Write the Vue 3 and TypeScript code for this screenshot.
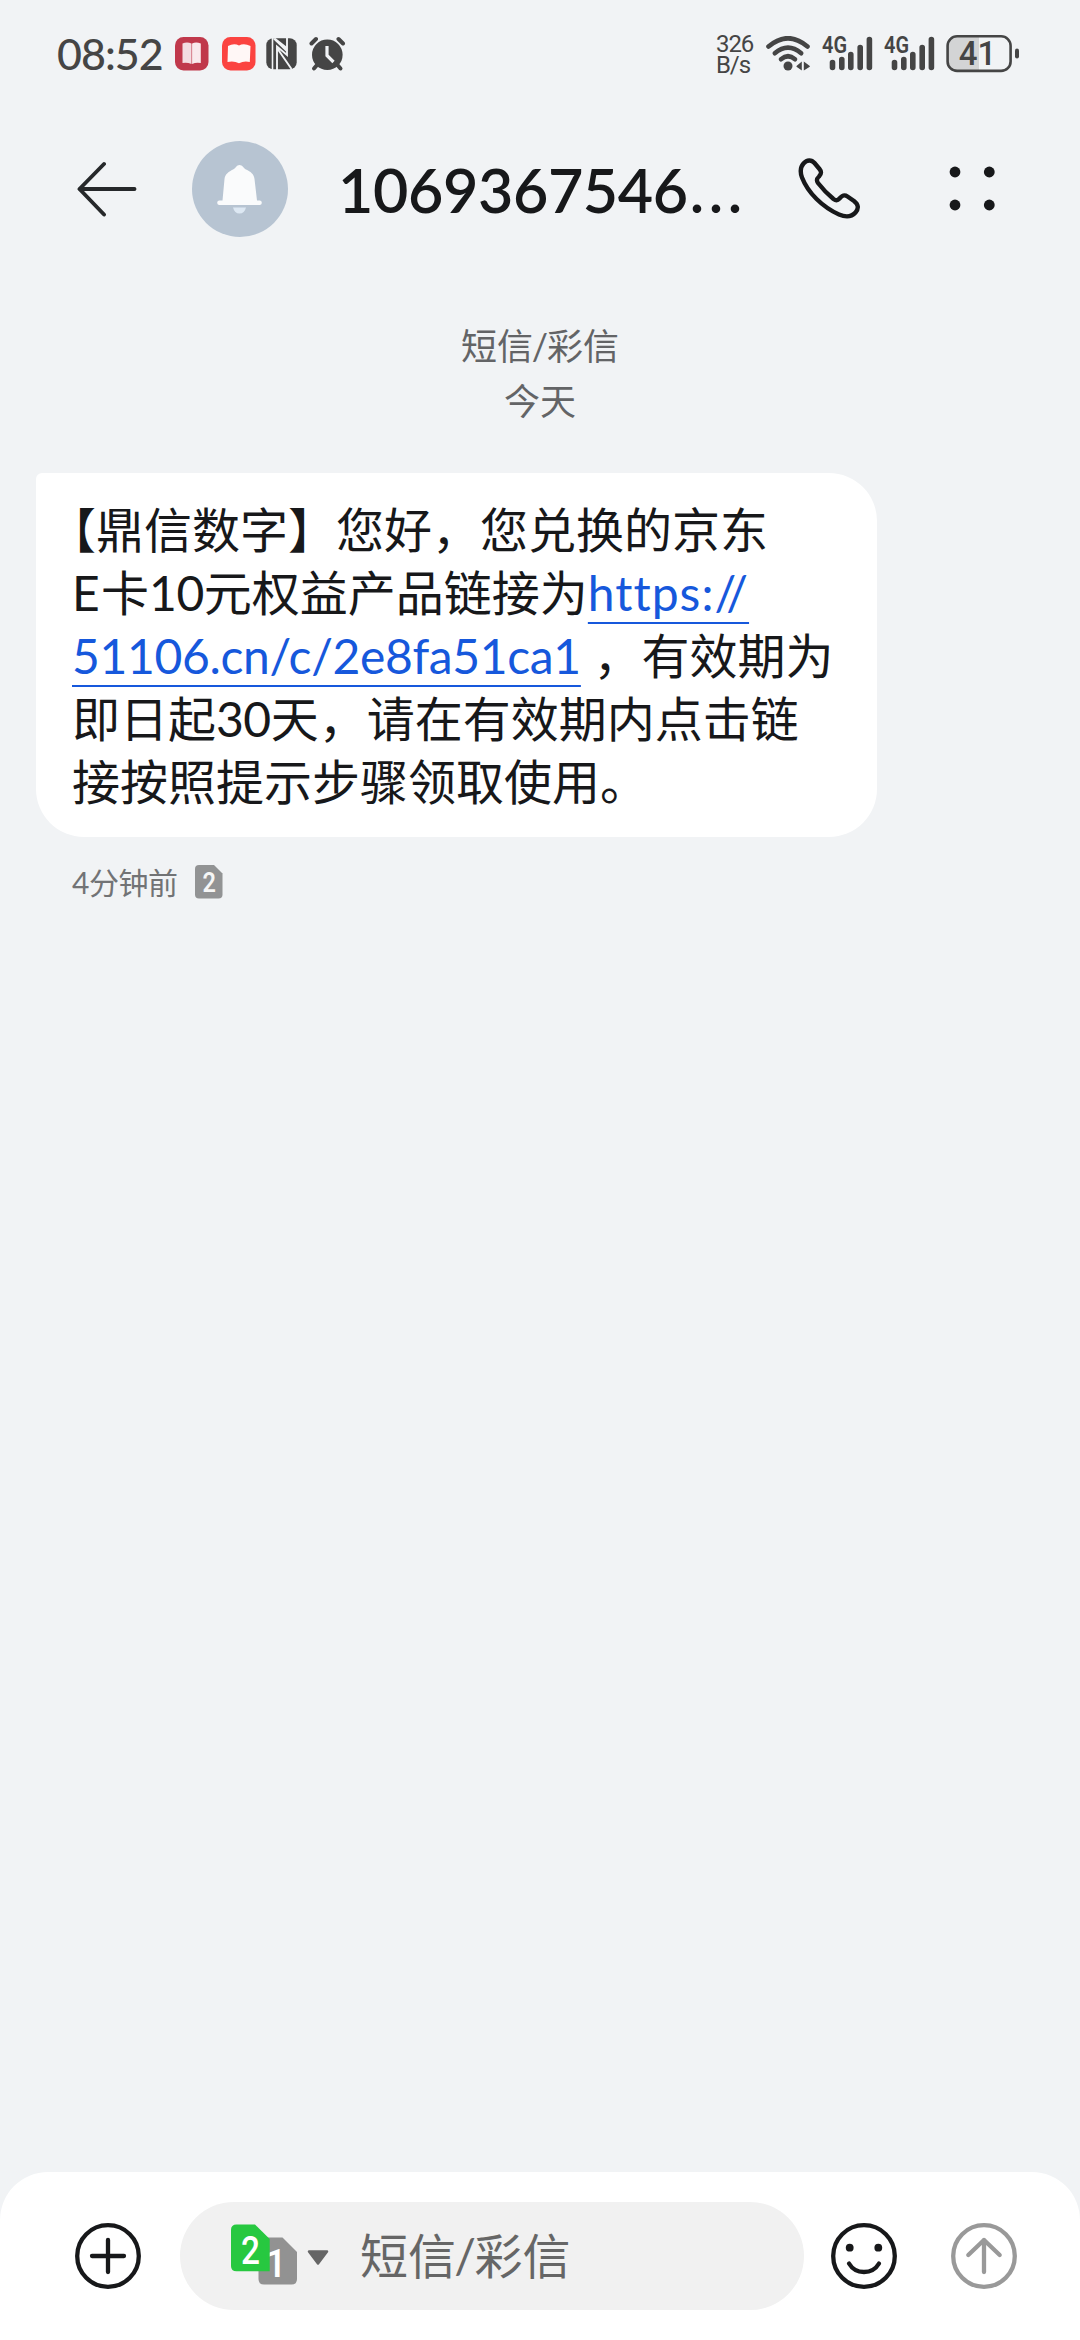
<script setup lang="ts">
interface Segment {
  text: string
  kind: 'cjk' | 'latin' | 'link'
  spacing?: number
}

const messageLines: Segment[][] = [
  [{ text: '【鼎信数字】您好，您兑换的京东', kind: 'cjk' }],
  [
    { text: 'E', kind: 'latin', spacing: 1.2 },
    { text: '卡', kind: 'cjk' },
    { text: '10', kind: 'latin', spacing: -0.4 },
    { text: '元权益产品链接为', kind: 'cjk' },
    { text: 'https://', kind: 'link', spacing: 1 },
  ],
  [
    { text: '51106.cn/c/2e8fa51ca1', kind: 'link', spacing: -0.35 },
    { text: ' ', kind: 'latin', spacing: 0.2 },
    { text: '，有效期为', kind: 'cjk' },
  ],
  [
    { text: '即日起', kind: 'cjk' },
    { text: '30', kind: 'latin', spacing: -0.5 },
    { text: '天，请在有效期内点击链', kind: 'cjk' },
  ],
  [{ text: '接按照提示步骤领取使用。', kind: 'cjk' }],
]

const sims = [1, 2]
</script>

<template>
  <div class="screen">
    <header class="status">
      <div class="status-left">
        <span class="clock">08:52</span>
        <svg class="book" width="34" height="34" viewBox="0 0 34 34">
          <rect width="33.5" height="33.5" rx="8.5" fill="#c0384b" />
          <path d="M7.5 6.500Q12 4.500 16.500 6.500V27Q12 25 7.500 26Z" fill="#f3dce1" />
          <path d="M17.100 6.500Q21 4.500 25.800 6.500V26Q21 25 17.100 27Z" fill="#f9e9ec" />
        </svg>
        <svg class="book2" width="34" height="34" viewBox="0 0 34 34">
          <rect width="33.5" height="33.5" rx="8.5" fill="#fb4340" />
          <path d="M6 9Q12 6 17 8.500Q22 6 28.500 9L27.800 25Q22 23.500 17 26.300Q12 23.500 5.500 25Z" fill="#fff7f6" />
        </svg>
        <svg class="nfc" width="32" height="34" viewBox="0 0 32 34">
          <rect x="0.3" y="1.200" width="30.400" height="31" rx="7" fill="#454545" />
          <path d="M6.500 1V33" fill="none" stroke="#f1f3f5" stroke-width="1.600" />
          <path d="M6.500 1.500L21 15.500V10L9.500 1Z" fill="#f1f3f5" />
          <path d="M21 1V18L11 9.500V33M11 11L25.500 32" fill="none" stroke="#f1f3f5" stroke-width="1.900" />
        </svg>
        <svg class="alarm" width="38" height="36" viewBox="0 0 38 36">
          <g stroke="#454545" stroke-linecap="round" fill="none">
            <path d="M2.500 7.500L7 3M34 7.500L29.500 3" stroke-width="4" />
            <path d="M8 29L5 32.500M28.500 29L31.500 32.500" stroke-width="4" />
          </g>
          <circle cx="18.300" cy="18.700" r="15.300" fill="#454545" />
          <path d="M18 10V19.500L24.500 26" fill="none" stroke="#f1f3f5" stroke-width="3.200" />
        </svg>
      </div>
      <div class="status-right">
        <div class="speed"><span>326</span><span>B/s</span></div>
        <svg class="wifi" width="46" height="36" viewBox="0 0 46 36">
          <g fill="none" stroke="#454545" stroke-width="4.600" stroke-linecap="round">
            <path d="M2.500 10.500Q22 -6 41.500 10.500" />
            <path d="M8.800 17.300Q22 6 35.200 17.300" />
            <path d="M15 23.200Q22 17.300 29 23.200" />
          </g>
          <circle cx="22" cy="30" r="4.500" fill="#454545" />
          <path d="M35.800 25.500V34.500L30.500 30.800V30ZM37.800 25.500V34.500L43.800 30.800V30Z" fill="#454545" />
        </svg>
        <svg v-for="sim in sims" :key="sim" class="signal" width="52" height="42" viewBox="0 -6 52 42">
          <text x="0" y="17" class="gen" textLength="25" lengthAdjust="spacingAndGlyphs">4G</text>
          <path
            d="M10.500 26.500V31.500M19.800 23.500V31.500M28.800 18.500V31.500M38.200 11.500V31.500M47.400 3.500V31.500"
            stroke="#454545"
            stroke-width="5.600"
            stroke-linecap="round"
          />
        </svg>
        <svg class="battery" width="76" height="40" viewBox="0 0 76 40">
          <path d="M12 2H33V37H12Q2 37 2 27V12Q2 2 12 2Z" fill="#d3d4d5" />
          <rect x="1.600" y="2.300" width="63" height="34.600" rx="9.500" fill="none" stroke="#454545" stroke-width="2.600" />
          <path d="M71 16.500V22.500" stroke="#454545" stroke-width="4" stroke-linecap="round" />
          <text x="31.500" y="31" text-anchor="middle" class="level">41</text>
        </svg>
      </div>
    </header>

    <nav class="bar">
      <svg class="back" width="62" height="60" viewBox="0 0 62 60">
        <path d="M2.500 30H57.500M27 5L2.500 30L27 55.500" fill="none" stroke="#26282a" stroke-width="3.900" stroke-linecap="round" stroke-linejoin="round" />
      </svg>
      <div class="avatar">
        <svg width="96" height="96" viewBox="0 0 96 96">
          <path d="M30.500 59.500L32.500 38C33 33 37 30.500 41 28.500C44 27 44.500 24 47.500 24S51.500 27 54 28.500C58.500 30.500 62 33 62.500 38L65 59.500H68A2.300 2.300 0 0 1 68 64H27A2.300 2.300 0 0 1 27 59.500Z" fill="#fafbfc" />
          <path d="M41 66.500H54Q52.500 72.500 47.500 72.500T41 66.500Z" fill="#dde8f3" />
        </svg>
      </div>
      <h1 class="title">1069367546<span class="more">...</span></h1>
      <svg class="phone" width="64" height="64" viewBox="0 0 64 64">
        <path d="M5.500 6.500C9 2.500 13.500 2.500 16.500 6L21.500 12C23.800 14.800 23.500 16.800 21 19.500C18.500 21.800 18.300 23.500 20 26C25 32.500 30 37.500 35.500 42C38 43.800 39.500 43.800 41.500 41.500C44.500 38 46.500 37.500 49.500 39.500L56 44C60.500 47.500 61 51.500 57.500 55.500C53.500 60 48 60.500 41 57.500C24.500 50 10 36 4 20.500C2 15 2 10.500 5.500 6.500Z" fill="none" stroke="#17181a" stroke-width="4.400" stroke-linejoin="round" />
      </svg>
      <svg class="dots" width="48" height="46" viewBox="0 0 48 46">
        <g fill="#17181a">
          <circle cx="6" cy="6" r="5.400" /><circle cx="40.300" cy="6" r="5.400" />
          <circle cx="6" cy="39" r="5.400" /><circle cx="40.300" cy="39" r="5.400" />
        </g>
      </svg>
    </nav>

    <main class="thread">
      <div class="stamp">
        <div>短信<span class="slash">/</span>彩信</div>
        <div>今天</div>
      </div>
      <div class="bubble">
        <p v-for="(line, i) in messageLines" :key="i" class="line" :class="{ hang: i === 0 }">
          <span
            v-for="(seg, j) in line"
            :key="j"
            :class="seg.kind"
            :style="{ letterSpacing: (seg.spacing ?? 0) + 'px' }"
          >{{ seg.text }}</span>
        </p>
      </div>
      <div class="meta">
        <span>4分钟前</span>
        <svg width="28" height="34" viewBox="0 0 28 34">
          <path d="M4 0H19L27.500 8.500V29.500Q27.500 33.500 23.500 33.500H4Q0 33.500 0 29.500V4Q0 0 4 0Z" fill="#929394" />
          <text x="7.500" y="27" textLength="13" lengthAdjust="spacingAndGlyphs" class="badge-num">2</text>
        </svg>
      </div>
    </main>

    <footer class="composer">
      <svg class="plus" width="68" height="68" viewBox="0 0 68 68">
        <g fill="none" stroke="#17181a" stroke-width="4.300" stroke-linecap="round">
          <circle cx="34" cy="34" r="30.800" />
          <path d="M34 18V50M18 34H50" />
        </g>
      </svg>
      <div class="field">
        <svg class="sim" width="66" height="62" viewBox="0 0 66 62">
          <path d="M33 13.500H51.500L66 28V55Q66 60.500 60.500 60.500H33Q27.500 60.500 27.500 55V19Q27.500 13.500 33 13.500Z" fill="#929292" />
          <text x="45" y="52.500" text-anchor="middle" class="sim-num">1</text>
          <path d="M5.500 0.500H24L38.700 15V47.300H5.500Q0 47.300 0 42V6Q0 0.500 5.500 0.500Z" fill="#27c840" />
          <text x="10" y="39.500" textLength="19" lengthAdjust="spacingAndGlyphs" class="sim-num">2</text>
        </svg>
        <svg class="caret" width="22" height="16" viewBox="0 0 22 16">
          <path d="M2 1.500H20L11 13.500Z" fill="#666" stroke="#666" stroke-width="2.500" stroke-linejoin="round" />
        </svg>
        <span class="placeholder">短信<span class="slash">/</span>彩信</span>
      </div>
      <svg class="smile" width="68" height="68" viewBox="0 0 68 68">
        <g fill="none" stroke="#17181a" stroke-width="4.300" stroke-linecap="round">
          <circle cx="34" cy="34" r="30.800" />
          <path d="M19 41.500Q24 50 34 50T49 41.500" />
        </g>
        <circle cx="19.700" cy="25.700" r="3.900" fill="#17181a" />
        <circle cx="48.300" cy="25.700" r="3.900" fill="#17181a" />
      </svg>
      <svg class="send" width="68" height="68" viewBox="0 0 68 68">
        <g fill="none" stroke="#999" stroke-width="4.300" stroke-linecap="round" stroke-linejoin="round">
          <circle cx="34" cy="34" r="30.800" />
          <path d="M34 50V18M18.300 33L34 18L49.700 33" />
        </g>
      </svg>
    </footer>
  </div>
</template>

<style>
body {
  margin: 0;
  background: #f1f3f5;
}
</style>

<style scoped>
.screen {
  width: 1080px;
  height: 2340px;
  display: flex;
  flex-direction: column;
  overflow: hidden;
  background: #f1f3f5;
  color: #17181a;
  font-family: Lato, "Noto Sans CJK SC", sans-serif;
}

svg {
  display: block;
  flex: none;
}

.status {
  height: 108px;
  box-sizing: border-box;
  padding: 36px 61px 0 57px;
  display: flex;
  justify-content: space-between;
}

.status-left,
.status-right {
  display: flex;
  align-items: flex-start;
}

.clock {
  width: 118px;
  margin-top: -1px;
  font-size: 43px;
  font-weight: 500;
  line-height: 38px;
  letter-spacing: -1px;
  color: #454545;
  white-space: nowrap;
}

.book {
  margin-top: 1px;
}

.book2 {
  margin: 1px 0 0 13px;
}

.nfc {
  margin: 1px 0 0 10px;
}

.alarm {
  margin-left: 11px;
}

.speed {
  display: flex;
  flex-direction: column;
  width: 50px;
  font-family: Roboto, sans-serif;
  font-size: 24px;
  line-height: 21px;
  letter-spacing: -1.100px;
  color: #454545;
  margin-top: -2px;
}

.wifi {
  margin-right: 10px;
}

.signal {
  margin-top: -6px;
  margin-right: 10px;
}

.gen {
  font: 600 23px Roboto, sans-serif;
  fill: #454545;
}

.battery {
  margin-top: -2px;
  margin-right: -3px;
}

.level {
  font: 500 33px Roboto, sans-serif;
  fill: #454545;
}

.bar {
  height: 162px;
  display: flex;
  align-items: center;
}

.back {
  margin-left: 77px;
}

.avatar {
  width: 96px;
  height: 96px;
  margin-left: 53px;
  border-radius: 50%;
  background: #b7c4d2;
}

.title {
  width: 460px;
  margin: 2px 0 0 50px;
  font-size: 61px;
  line-height: 80px;
  font-weight: 600;
  letter-spacing: -0.400px;
  white-space: nowrap;
}

.more {
  letter-spacing: 4.500px;
  margin-left: 2px;
}

.dots {
  margin-left: 87px;
}

.thread {
  flex: 1;
  padding: 49px 36px 0;
}

.stamp {
  font-size: 36px;
  line-height: 55px;
  color: #636466;
  text-align: center;
}

.slash {
  margin: 0 -0.035em;
}

.bubble {
  width: 841px;
  height: 364px;
  box-sizing: border-box;
  margin-top: 44px;
  padding: 25px 36px 0;
  border-radius: 6px 48px 48px 48px;
  background: #fff;
}

.line {
  margin: 0;
  height: 63px;
  font-size: 48px;
  line-height: 63px;
  white-space: pre;
}

.hang {
  margin-left: -24px;
}

.link {
  color: #1658dc;
  text-decoration: underline;
  text-decoration-thickness: 2px;
  text-underline-offset: 11px;
  text-decoration-skip-ink: none;
}

.meta {
  display: flex;
  align-items: center;
  gap: 18px;
  margin: 25px 0 0 36px;
  font-size: 30px;
  line-height: 40px;
  letter-spacing: -0.500px;
  color: #727375;
}

.badge-num {
  font: 600 28px Roboto, sans-serif;
  fill: #f6f6f6;
}

.composer {
  height: 168px;
  box-sizing: border-box;
  padding: 30px 62px 30px 74px;
  display: flex;
  align-items: center;
  border-radius: 48px 48px 0 0;
  background: #fff;
}

.field {
  width: 624px;
  height: 108px;
  box-sizing: border-box;
  margin: 0 26px 0 38px;
  padding-left: 51px;
  display: flex;
  align-items: center;
  border-radius: 54px;
  background: #f1f1f1;
}

.sim {
  margin-top: -3px;
}

.sim-num {
  font: 500 38px Roboto, sans-serif;
  fill: #fff;
}

.caret {
  margin: 4px 0 0 10px;
}

.placeholder {
  margin-left: 31px;
  font-size: 48px;
  line-height: 60px;
  color: #666;
  white-space: nowrap;
}

.send {
  margin-left: 52px;
}
</style>
